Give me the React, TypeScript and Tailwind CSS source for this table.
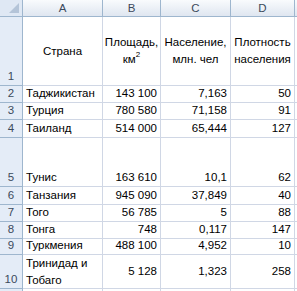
import React from 'react';

type Row = {
  num: number;
  h: string;
  name: string;
  area: string;
  pop: string;
  dens: string;
  wrap?: boolean;
};

const rows: Row[] = [
  { num: 2, h: 'h-[17px]', name: 'Таджикистан', area: '143 100', pop: '7,163', dens: '50' },
  { num: 3, h: 'h-[17px]', name: 'Турция', area: '780 580', pop: '71,158', dens: '91' },
  { num: 4, h: 'h-[18px]', name: 'Таиланд', area: '514 000', pop: '65,444', dens: '127' },
  { num: 5, h: 'h-[49px]', name: 'Тунис', area: '163 610', pop: '10,1', dens: '62' },
  { num: 6, h: 'h-[18px]', name: 'Танзания', area: '945 090', pop: '37,849', dens: '40' },
  { num: 7, h: 'h-[17px]', name: 'Того', area: '56 785', pop: '5', dens: '88' },
  { num: 8, h: 'h-[17px]', name: 'Тонга', area: '748', pop: '0,117', dens: '147' },
  { num: 9, h: 'h-[16px]', name: 'Туркмения', area: '488 100', pop: '4,952', dens: '10' },
  { num: 10, h: 'h-[34px]', name: 'Тринидад и Тобаго', area: '5 128', pop: '1,323', dens: '258', wrap: true },
];

const grid = 'border-r border-b border-[#d0d7e5]';
const rowHead = 'border-r border-b border-[#9eb6ce] bg-[#e4ecf7] text-[#3b4a5c] flex items-end justify-center';
const colHead =
  'border-r border-b border-[#9eb6ce] bg-gradient-to-b from-[#f9fbfd] to-[#dfe6f0] text-[#3b4a5c] flex items-center justify-center';

export default function App() {
  return (
    <div
      className="w-[297px] h-[291px] overflow-hidden bg-white text-black text-[11.5px] leading-[17px]"
      style={{ fontFamily: '"Liberation Sans", Arial, sans-serif' }}
    >
      <div className="grid grid-cols-[23px_80px_58px_70px_64px_1fr]">
        {/* column headers */}
        <div className="h-[17px] border-r border-b border-[#9eb6ce] bg-[#dfe8f4] relative">
          <svg className="absolute right-[3px] bottom-[3px]" width="10" height="10" viewBox="0 0 10 10">
            <polygon points="10,0 10,10 0,10" fill="#b4c4d8" />
          </svg>
        </div>
        <div className={`h-[17px] ${colHead}`}>A</div>
        <div className={`h-[17px] ${colHead}`}>B</div>
        <div className={`h-[17px] ${colHead}`}>C</div>
        <div className={`h-[17px] ${colHead}`}>D</div>
        <div className={`h-[17px] ${colHead} border-r-0`}></div>

        {/* row 1 */}
        <div className={`h-[69px] ${rowHead}`}>1</div>
        <div className={`h-[69px] ${grid} flex items-center justify-center text-center`}>Страна</div>
        <div className={`h-[69px] ${grid} flex items-center justify-center text-center`}>
          <span>
            Площадь,
            <br />
            км<span className="text-[8px] relative -top-[6px]">2</span>
          </span>
        </div>
        <div className={`h-[69px] ${grid} flex items-center justify-center text-center`}>
          <span>
            Население,
            <br />
            млн. чел
          </span>
        </div>
        <div className={`h-[69px] ${grid} flex items-center justify-center text-center`}>
          <span>
            Плотность
            <br />
            населения
          </span>
        </div>
        <div className={`h-[69px] ${grid} border-r-0`}></div>

        {rows.map((r) => (
          <React.Fragment key={r.num}>
            <div className={`${r.h} ${rowHead}`}>{r.num}</div>
            <div className={`${r.h} ${grid} flex ${r.wrap ? 'items-center' : 'items-end'} pl-[3px] whitespace-nowrap`}>
              {r.wrap ? (
                <span>
                  Тринидад и
                  <br />
                  Тобаго
                </span>
              ) : (
                r.name
              )}
            </div>
            <div className={`${r.h} ${grid} flex ${r.wrap ? 'items-center' : 'items-end'} justify-end pr-[3px]`}>{r.area}</div>
            <div className={`${r.h} ${grid} flex ${r.wrap ? 'items-center' : 'items-end'} justify-end pr-[3px]`}>{r.pop}</div>
            <div className={`${r.h} ${grid} flex ${r.wrap ? 'items-center' : 'items-end'} justify-end pr-[3px]`}>{r.dens}</div>
            <div className={`${r.h} ${grid} border-r-0`}></div>
          </React.Fragment>
        ))}

        {/* row 11, cut off */}
        <div className="h-[17px] border-r border-[#9eb6ce] bg-[#e4ecf7]"></div>
        <div className="h-[17px] border-r border-[#d0d7e5]"></div>
        <div className="h-[17px] border-r border-[#d0d7e5]"></div>
        <div className="h-[17px] border-r border-[#d0d7e5]"></div>
        <div className="h-[17px] border-r border-[#d0d7e5]"></div>
        <div className="h-[17px]"></div>
      </div>
    </div>
  );
}
